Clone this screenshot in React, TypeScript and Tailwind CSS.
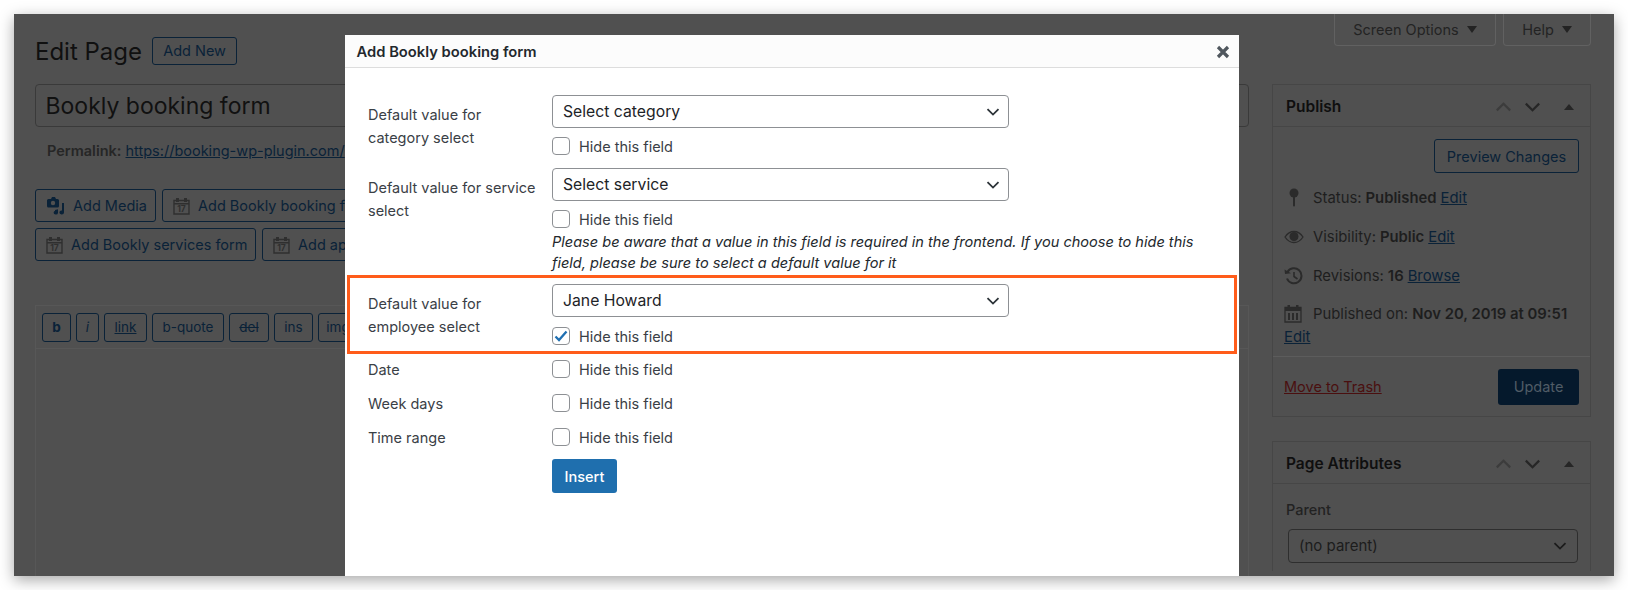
import { ReactNode } from "react";

const font = "font-['Inter','Liberation_Sans',sans-serif]";

function Chevron({ className = "" }: { className?: string }) {
  return (
    <svg width="14" height="8" viewBox="0 0 14 8" className={className} fill="none">
      <path d="M1.500 1.200 7 6.600l5.500-5.400" stroke="currentColor" strokeWidth="1.800" />
    </svg>
  );
}

function CalendarIcon() {
  return (
    <svg width="17" height="18" viewBox="0 0 17 18" className="shrink-0 text-[#2f2f2f]">
      <path d="M1 3.500h15V17H1z M1 3.500v3.200h15V3.500" fill="none" stroke="currentColor" strokeWidth="1.400" />
      <path d="M3 1h3v4H3zM11 1h3v4h-3z" fill="currentColor" />
      <text x="8.500" y="15.200" textAnchor="middle" fontSize="8.500" fontWeight="700" fill="currentColor" fontFamily="Inter">17</text>
    </svg>
  );
}

function MediaIcon() {
  return (
    <svg width="19" height="18" viewBox="0 0 19 18" className="shrink-0 text-[#0a2238]">
      <path d="M3 2h2l1-2h3l1 2h1.500A1.500 1.500 0 0 1 13 3.500V9a1.500 1.500 0 0 1-1.500 1.500h-9A1.500 1.500 0 0 1 1 9V3.500A1.500 1.500 0 0 1 2.500 2z" fill="currentColor" />
      <circle cx="7" cy="6" r="2.200" fill="#505050" />
      <path d="M16 6h2v9.500a2.300 2 0 1 1-2-2zM9 13l3-.7v3.400a2.200 1.900 0 1 1-2-1.900l-1 .2z" fill="currentColor" />
    </svg>
  );
}

function WpButton({ children, className = "" }: { children: ReactNode; className?: string }) {
  return (
    <div className={`flex shrink-0 items-center whitespace-nowrap rounded-[3px] border border-[#0a2238] text-[14.500px] text-[#0a2238] ${className}`}>
      {children}
    </div>
  );
}

function ToolButton({ children, className = "" }: { children: ReactNode; className?: string }) {
  return (
    <div className={`flex h-[29px] shrink-0 items-center justify-center rounded-[3px] border border-[#0a2238] text-[13.500px] text-[#0a2238] ${className}`}>
      {children}
    </div>
  );
}

function MetaHead({ title }: { title: string }) {
  return (
    <div className="flex h-[42px] items-center border-b border-[#464646] pl-[13px] pr-[16px] pt-[2px]">
      <span className="text-[15.500px] font-semibold text-[#0f0f0f]">{title}</span>
      <div className="ml-auto flex items-center">
        <Chevron className="h-[10px] w-[17px] rotate-180 text-[#3c3c3c]" />
        <Chevron className="ml-[12px] h-[10px] w-[17px] text-[#262626]" />
        <div className="ml-[23px] h-0 w-0 border-x-[5px] border-b-[6px] border-x-transparent border-b-[#262626]" />
      </div>
    </div>
  );
}

function EditLink({ children }: { children: ReactNode }) {
  return <span className="text-[#0a2238] underline">{children}</span>;
}

function SelectBox({ value }: { value: string }) {
  return (
    <div className="flex h-[33px] w-[457px] items-center justify-between rounded-[4px] border-[1.500px] border-[#8d9094] pl-[10px] pr-[8px] text-[15.750px] text-[#1d2327]">
      <span className="pt-[1px]">{value}</span>
      <Chevron className="text-[#2c3338]" />
    </div>
  );
}

function HideField({ checked = false }: { checked?: boolean }) {
  return (
    <div className="flex h-[18px] items-center gap-[9px] text-[14.500px] text-[#3a4046]">
      <div className="flex h-[18px] w-[18px] shrink-0 items-center justify-center rounded-[4px] border-[1.500px] border-[#8d9094] bg-white">
        {checked && (
          <svg width="14" height="12" viewBox="0 0 14 12" fill="none">
            <path d="M1.500 6.500 5 10l7.500-8.500" stroke="#1f6fb2" strokeWidth="2.300" />
          </svg>
        )}
      </div>
      <span className="pt-[1px]">Hide this field</span>
    </div>
  );
}

function FieldLabel({ children }: { children: ReactNode }) {
  return <div className="w-[184px] shrink-0 pt-[9px] text-[14.500px] leading-[22.500px] text-[#3a4046]">{children}</div>;
}

function ToggleRow({ label, className = "" }: { label: string; className?: string }) {
  return (
    <div className={`flex h-[18px] items-center pl-[23px] ${className}`}>
      <div className="w-[184px] shrink-0 pt-[1px] text-[14.500px] text-[#3a4046]">{label}</div>
      <HideField />
    </div>
  );
}

function Modal() {
  return (
    <div className="absolute left-[331.500px] top-[21px] h-[541px] w-[894px] bg-white">
      <div className="relative flex h-[33px] items-center border-b border-[#dddddd] bg-[#fcfcfc] pl-[11.500px] pt-[2px] text-[14.750px] font-semibold text-[#23282d]">
        Add Bookly booking form
        <svg width="14" height="14" viewBox="0 0 14 14" className="absolute right-[9px] top-[10px] text-[#50575e]">
          <path d="M2 2l10 10M12 2 2 12" stroke="currentColor" strokeWidth="3.200" />
        </svg>
      </div>
      <div className="flex pl-[23px] pt-[27px]">
        <FieldLabel>
          Default value for
          <br />
          category select
        </FieldLabel>
        <div className="flex flex-col gap-[9px]">
          <SelectBox value="Select category" />
          <HideField />
        </div>
      </div>
      <div className="mt-[13px] flex pl-[23px]">
        <FieldLabel>
          Default value for service
          <br />
          select
        </FieldLabel>
        <div className="flex flex-col gap-[9px]">
          <SelectBox value="Select service" />
          <HideField />
          <p className="-mt-[5.500px] w-[660px] text-[14.550px] italic leading-[21px] text-[#23282d]">
            Please be aware that a value in this field is required in the frontend. If you choose to hide this field, please be sure to select a default value for it
          </p>
        </div>
      </div>
      <div className="mx-[2px] mt-[1.500px] flex h-[79px] border-[3px] border-[#ff5c1a] pl-[18px] pt-[6px]">
        <FieldLabel>
          Default value for
          <br />
          employee select
        </FieldLabel>
        <div className="flex flex-col gap-[10px]">
          <SelectBox value="Jane Howard" />
          <HideField checked />
        </div>
      </div>
      <ToggleRow label="Date" className="mt-[6px]" />
      <ToggleRow label="Week days" className="mt-[16px]" />
      <ToggleRow label="Time range" className="mt-[16px]" />
      <div className="ml-[207px] mt-[13px] flex h-[34px] w-[65px] items-center justify-center rounded-[3px] bg-[#1f6fae] pt-[1px] text-[14.500px] font-medium text-white">
        Insert
      </div>
    </div>
  );
}

export default function App() {
  return (
    <div className={`h-[590px] w-[1628px] overflow-hidden bg-white pl-[13.500px] pt-[14px] ${font}`}>
      <div className="relative flex h-[562px] w-[1600.500px] overflow-hidden bg-[#505050] text-[#1c1c1c] shadow-[0_4px_14px_rgba(0,0,0,0.35)]">
        <div className="w-[1258.500px] shrink-0 pl-[21.500px] pr-[23px] pt-[23px]">
          <div className="flex h-[28px] items-center gap-[10px]">
            <h1 className="pt-[1px] text-[24px] leading-[28px] text-[#101010]">Edit Page</h1>
            <WpButton className="h-[28px] w-[85px] justify-center">Add New</WpButton>
          </div>
          <div className="mt-[19px] flex h-[43px] items-center rounded-[4px] border border-[#3a3a3a] pl-[9.500px] pt-[1px] text-[23px] text-[#111111]">
            Bookly booking form
          </div>
          <div className="mt-[14px] whitespace-nowrap pl-[12px] text-[14.500px] leading-[20px] text-[#262626]">
            <span className="font-semibold">Permalink:</span> <EditLink>https://booking-wp-plugin.com/</EditLink>
          </div>
          <div className="mt-[28px] flex gap-[6px]">
            <WpButton className="h-[33px] w-[121px] gap-[8px] pl-[10px] pt-[1px]">
              <MediaIcon /> Add Media
            </WpButton>
            <WpButton className="h-[33px] gap-[8px] px-[10px] pt-[1px]">
              <CalendarIcon /> Add Bookly booking form
            </WpButton>
          </div>
          <div className="mt-[6px] flex gap-[6px]">
            <WpButton className="h-[33px] w-[221px] gap-[8px] pl-[10px]">
              <CalendarIcon /> Add Bookly services form
            </WpButton>
            <WpButton className="h-[33px] gap-[8px] px-[10px]">
              <CalendarIcon /> Add appointments list
            </WpButton>
          </div>
          <div className="mt-[44px] h-[280px] border-x border-t border-[#575757]">
            <div className="flex h-[43px] items-center gap-[5px] border-b border-[#575757] pl-[6px]">
              <ToolButton className="w-[29px] font-bold">b</ToolButton>
              <ToolButton className="w-[23px] italic">i</ToolButton>
              <ToolButton className="w-[43px] underline">link</ToolButton>
              <ToolButton className="w-[72px]">b-quote</ToolButton>
              <ToolButton className="w-[40px] line-through">del</ToolButton>
              <ToolButton className="w-[39px]">ins</ToolButton>
              <ToolButton className="w-[40px]">img</ToolButton>
            </div>
          </div>
        </div>
        <div className="w-[319px] shrink-0">
          <div className="flex justify-end gap-[7px]">
            <div className="flex h-[32px] w-[162px] items-center justify-center gap-[8px] rounded-b-[4px] border-x border-b border-[#616161] text-[14.500px] text-[#232323]">
              Screen Options
              <div className="h-0 w-0 border-x-[5px] border-t-[7px] border-x-transparent border-t-[#232323]" />
            </div>
            <div className="flex h-[32px] w-[88px] items-center justify-center gap-[8px] rounded-b-[4px] border-x border-b border-[#616161] text-[14.500px] text-[#232323]">
              Help
              <div className="h-0 w-0 border-x-[5px] border-t-[7px] border-x-transparent border-t-[#232323]" />
            </div>
          </div>
          <div className="mt-[38px] h-[333px] border border-[#464646]">
            <MetaHead title="Publish" />
            <div className="flex justify-end pr-[11px] pt-[12px]">
              <WpButton className="h-[34px] w-[145px] justify-center pt-[1px]">Preview Changes</WpButton>
            </div>
            <div className="pl-[40px] pt-[14px] text-[14.850px] text-[#1e1e1e]">
              <div className="relative flex h-[22px] items-center gap-[4px]">
                <svg width="10" height="19" viewBox="0 0 10 19" className="absolute -left-[24px] top-[1px] text-[#2b2b2b]">
                  <circle cx="5" cy="5" r="4.500" fill="currentColor" />
                  <rect x="4" y="8" width="2" height="10.500" rx="1" fill="currentColor" />
                </svg>
                Status: <b className="font-semibold">Published</b> <EditLink>Edit</EditLink>
              </div>
              <div className="relative mt-[17px] flex h-[22px] items-center gap-[4px]">
                <svg width="20" height="14" viewBox="0 0 20 14" className="absolute -left-[29px] top-[4px] text-[#2b2b2b]">
                  <path d="M1 7c2.500-3.800 5.500-5.500 9-5.500S16.500 3.200 19 7c-2.500 3.800-5.500 5.500-9 5.500S3.500 10.800 1 7z" fill="none" stroke="currentColor" strokeWidth="1.300" />
                  <circle cx="10" cy="6.500" r="4.500" fill="currentColor" />
                </svg>
                Visibility: <b className="font-semibold">Public</b> <EditLink>Edit</EditLink>
              </div>
              <div className="relative mt-[17px] flex h-[22px] items-center gap-[4px]">
                <svg width="19" height="18" viewBox="0 0 19 18" className="absolute -left-[29px] top-[2px] text-[#2b2b2b]" fill="none">
                  <path d="M3.500 5A7.500 7.500 0 1 1 3 11.500" stroke="currentColor" strokeWidth="2" />
                  <path d="M0.500 2.500l6.500 3.800-6 .8z" fill="currentColor" />
                  <path d="M10 5v4.500l3.500 2.500" stroke="currentColor" strokeWidth="1.600" />
                </svg>
                Revisions: <b className="font-semibold">16</b> <EditLink>Browse</EditLink>
              </div>
              <div className="relative mt-[16px]">
                <svg width="18" height="19" viewBox="0 0 18 19" className="absolute -left-[29px] top-[1px] text-[#2b2b2b]" fill="none">
                  <path d="M1 3.500h16V18H1z" stroke="currentColor" strokeWidth="1.300" />
                  <path d="M1 3.500h16V7H1zM3.500 1h2.500v3H3.500zM12 1h2.500v3H12z" fill="currentColor" />
                  <path d="M5 9v7M9 9v7M13 9v7" stroke="currentColor" strokeWidth="2" />
                </svg>
                <div className="leading-[22px]">
                  Published on: <b className="font-semibold">Nov 20, 2019 at 09:51</b>
                </div>
                <div className="-ml-[29px] mt-[1px] leading-[22px]">
                  <EditLink>Edit</EditLink>
                </div>
              </div>
            </div>
            <div className="mt-[8px] flex h-[61px] items-center justify-between border-t border-[#5c5c5c] pl-[11px] pr-[11px]">
              <span className="text-[14.500px] text-[#4a0f0f] underline">Move to Trash</span>
              <div className="flex h-[36px] w-[81px] items-center justify-center rounded-[3px] bg-[#05192c] text-[14.500px] text-[#505c66]">
                Update
              </div>
            </div>
          </div>
          <div className="mt-[24px] h-[130px] border-x border-t border-[#464646]">
            <MetaHead title="Page Attributes" />
            <div className="pl-[13px] pt-[16px] text-[14.500px] font-medium leading-[20px] text-[#222222]">Parent</div>
            <div className="ml-[15px] mt-[9px] flex h-[34px] w-[290px] items-center justify-between rounded-[4px] border-[1.500px] border-[#2e2e2e] pl-[10px] pr-[10px] text-[15px] text-[#1c1c1c]">
              (no parent)
              <Chevron className="text-[#1c1c1c]" />
            </div>
          </div>
        </div>
        <Modal />
      </div>
    </div>
  );
}
